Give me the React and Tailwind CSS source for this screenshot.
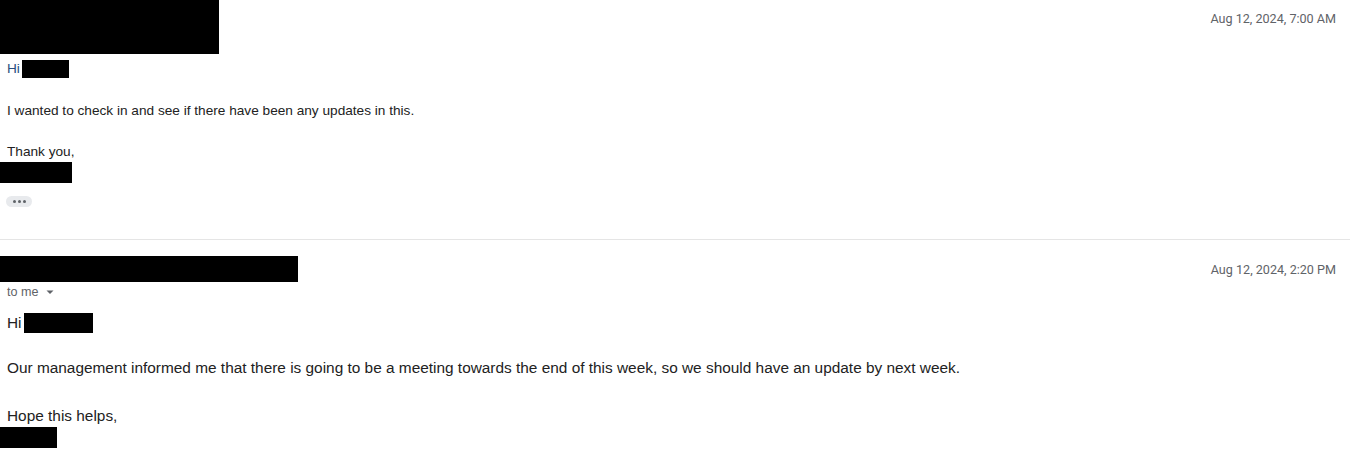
import { useState } from 'react';

function Redact({ className }) {
  return <span className={'inline-block bg-black align-middle ' + className} />;
}

function Caret() {
  return (
    <svg width="10" height="10" viewBox="0 0 10 10" className="ml-[6px] inline-block">
      <path d="M1.5 3.5h7L5 7z" fill="#5f6368" />
    </svg>
  );
}

export default function App() {
  const [expanded, setExpanded] = useState(false);

  return (
    <div className="w-[1350px] h-[472px] bg-white overflow-hidden font-['Liberation_Sans',Arial,sans-serif] text-[#222]">
      {/* first message */}
      <div className="relative">
        <div className="absolute right-[14px] top-[11px] text-[12.6px] leading-4 text-[#5f6368] font-['Roboto',sans-serif]">
          Aug 12, 2024, 7:00 AM
        </div>
        <div className="w-[219px] h-[54px] bg-black" />
        <div className="pl-[7px] text-[13.65px] leading-[18px]">
          <div className="flex items-center h-[18px] mt-[6px] text-[#2a4f80]">
            Hi<Redact className="ml-[2px] w-[47px] h-[18px]" />
          </div>
          <p className="mt-[24px]">I wanted to check in and see if there have been any updates in this.</p>
          <p className="mt-[23px]">Thank you,</p>
        </div>
        <div className="w-[72px] h-[21px] bg-black mt-[1px]" />
        <button
          onClick={() => setExpanded(!expanded)}
          className="ml-[6px] mt-[13px] flex items-center justify-center gap-[2px] w-[26px] h-[11px] rounded-full bg-[#e8eaed]"
        >
          <span className="w-[3px] h-[3px] rounded-full bg-[#5f6368]" />
          <span className="w-[3px] h-[3px] rounded-full bg-[#5f6368]" />
          <span className="w-[3px] h-[3px] rounded-full bg-[#5f6368]" />
        </button>
      </div>

      <div className="mt-[32px] border-t border-[#e5e5e5]" />

      {/* second message */}
      <div className="relative pt-[16px]">
        <div className="absolute right-[14px] top-[22px] text-[12.6px] leading-4 text-[#5f6368] font-['Roboto',sans-serif]">
          Aug 12, 2024, 2:20 PM
        </div>
        <div className="w-[298px] h-[26px] bg-black" />
        <div className="pl-[7px] flex items-center h-[19px] pt-px text-[12.6px] text-[#5f6368]">
          to me
          <Caret />
        </div>
        <div className="pl-[7px] text-[15.4px] leading-5">
          <div className="flex items-center h-[20px] mt-[12px]">
            Hi<Redact className="ml-[2px] w-[69px] h-[20px]" />
          </div>
          <p className="mt-[25px]">
            Our management informed me that there is going to be a meeting towards the end of this week, so we should have an update by next week.
          </p>
          <p className="mt-[28px]">Hope this helps,</p>
        </div>
        <div className="w-[57px] h-[21px] bg-black mt-[1px]" />
      </div>
    </div>
  );
}
